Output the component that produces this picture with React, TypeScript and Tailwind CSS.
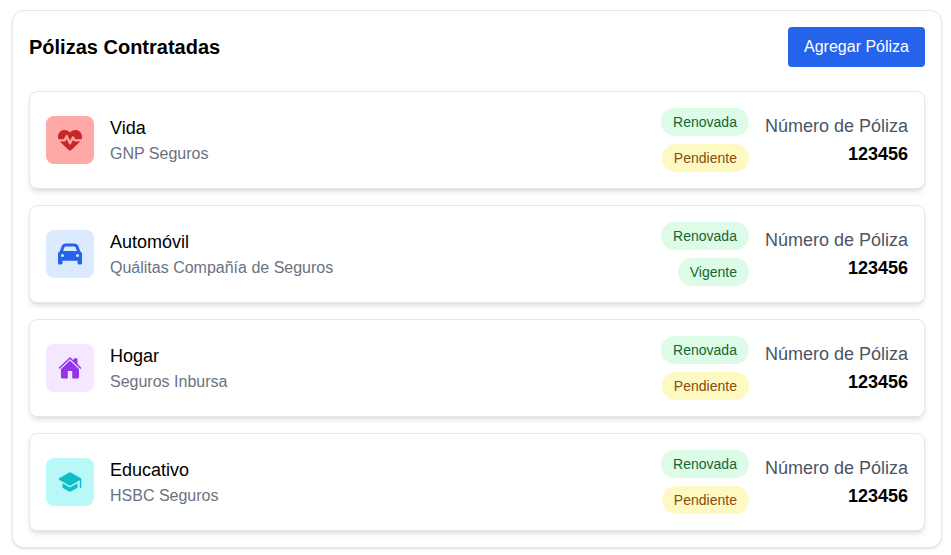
import { FaCar, FaHeartPulse } from 'react-icons/fa6'
import { IoHome, IoSchool } from 'react-icons/io5'
import type { IconType } from 'react-icons'

type Policy = {
  name: string
  company: string
  status: string
  Icon: IconType
  iconClass: string
}

const policies: Policy[] = [
  { name: 'Vida', company: 'GNP Seguros', status: 'Pendiente', Icon: FaHeartPulse, iconClass: 'bg-[#ffa8a8] text-[#c62828]' },
  { name: 'Automóvil', company: 'Quálitas Compañía de Seguros', status: 'Vigente', Icon: FaCar, iconClass: 'bg-[#dbeafe] text-[#2563eb]' },
  { name: 'Hogar', company: 'Seguros Inbursa', status: 'Pendiente', Icon: IoHome, iconClass: 'bg-[#f3e8ff] text-[#9333ea]' },
  { name: 'Educativo', company: 'HSBC Seguros', status: 'Pendiente', Icon: IoSchool, iconClass: 'bg-[#b8f9f7] text-[#0dbfc4]' },
]

function Badge({ label }: { label: string }) {
  const colors =
    label === 'Pendiente'
      ? 'bg-[#fef9c3] text-[#854d0e]'
      : 'bg-[#dcfce7] text-[#166534]'

  return (
    <span className={`rounded-full px-3 py-1 text-sm ${colors}`}>{label}</span>
  )
}

function PolicyCard({ policy }: { policy: Policy }) {
  const { Icon } = policy

  return (
    <div className="flex items-center justify-between rounded-lg border border-[#e5e7eb] bg-white p-4 shadow-md">
      <div className="flex items-center gap-4">
        <div className={`flex h-12 w-12 items-center justify-center rounded-lg ${policy.iconClass}`}>
          <Icon className="h-6 w-6" />
        </div>
        <div>
          <p className="text-lg text-black">{policy.name}</p>
          <p className="text-base text-[#6b7280]">{policy.company}</p>
        </div>
      </div>

      <div className="flex items-center gap-4">
        <div className="flex flex-col items-end gap-2">
          <Badge label="Renovada" />
          <Badge label={policy.status} />
        </div>
        <div className="text-right">
          <p className="text-lg text-[#4b5563]">Número de Póliza</p>
          <p className="text-lg font-bold text-black">123456</p>
        </div>
      </div>
    </div>
  )
}

export default function App() {
  return (
    <div className="min-h-screen bg-white pt-2.5 pr-[9px] pl-3 font-['Liberation_Sans',Arial,sans-serif]">
      <div className="rounded-xl border border-[#e5e7eb] bg-white p-4 shadow-sm">
        <div className="mb-6 flex items-center justify-between">
          <h2 className="text-xl font-bold text-black">Pólizas Contratadas</h2>
          <button className="rounded bg-[#2563eb] px-4 py-2 text-base text-white">
            Agregar Póliza
          </button>
        </div>

        <div className="flex flex-col gap-4">
          {policies.map((policy) => (
            <PolicyCard key={policy.name} policy={policy} />
          ))}
        </div>
      </div>
    </div>
  )
}
